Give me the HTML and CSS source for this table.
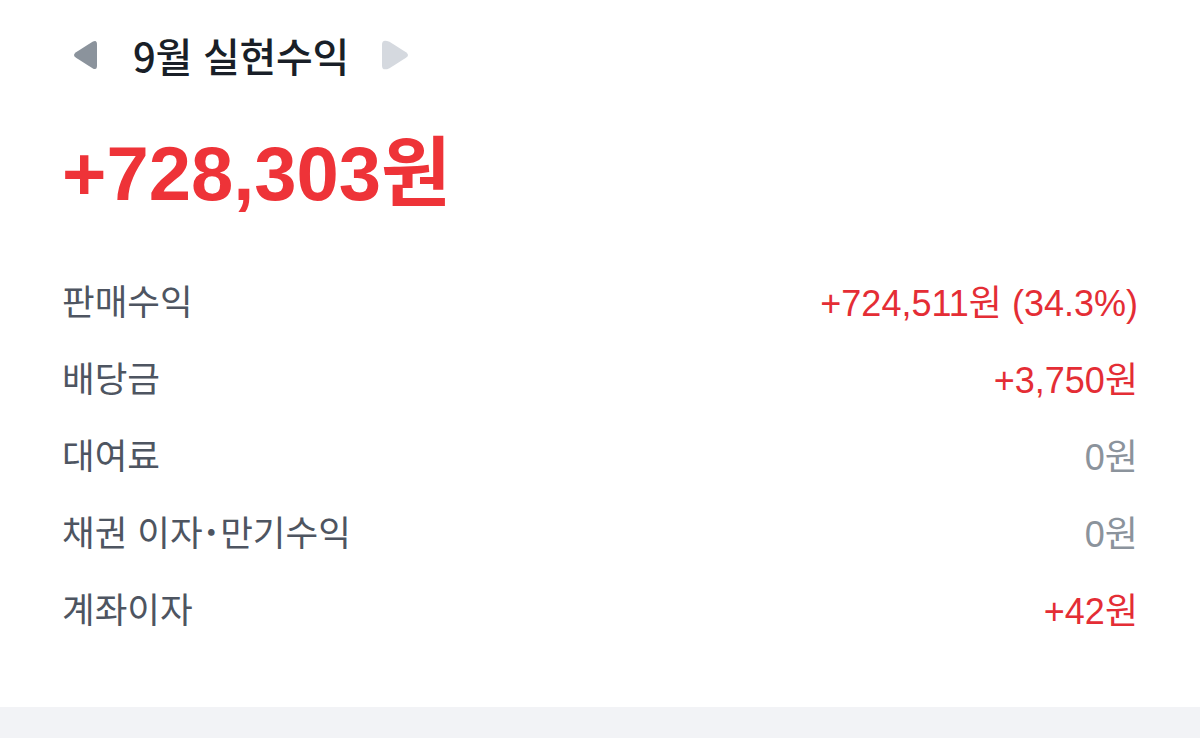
FILE: index.html
```html
<!DOCTYPE html>
<html lang="ko">
<head>
<meta charset="utf-8">
<link rel="stylesheet" href="styles.css">
</head>
<body>
<section class="card">
  <header class="month">
    <button class="nav nav-prev" aria-label="이전 달">
      <svg width="26" height="30" viewBox="0 0 26 30"><path d="M4 12.2 L20.5 1.8 Q25 -0.8 25 4.5 L25 25.5 Q25 30.8 20.5 28.2 L4 17.8 Q0 15 4 12.2 Z" fill="#8b939c"/></svg>
    </button>
    <h1 class="month-title">9월 실현수익</h1>
    <button class="nav nav-next" aria-label="다음 달">
      <svg width="29" height="30" viewBox="0 0 29 30"><path d="M25 12.2 L8.5 1.8 Q1 -1.5 1 4.5 L1 25.5 Q1 31.5 8.5 28.2 L25 17.8 Q29 15 25 12.2 Z" fill="#d5d9df"/></svg>
    </button>
  </header>
  <div class="total">+728,303원</div>
  <ul class="rows">
    <li class="row"><span class="label">판매수익</span><span class="value plus">+724,511원 (34.3%)</span></li>
    <li class="row"><span class="label">배당금</span><span class="value plus">+3,750원</span></li>
    <li class="row"><span class="label">대여료</span><span class="value zero">0원</span></li>
    <li class="row"><span class="label">채권 이자<span class="dot">·</span>만기수익</span><span class="value zero">0원</span></li>
    <li class="row"><span class="label">계좌이자</span><span class="value plus">+42원</span></li>
  </ul>
</section>
<div class="divider"></div>
</body>
</html>
```
FILE: styles.css
```css
* { box-sizing: border-box; }
html, body { margin: 0; padding: 0; background: #fff; }
body {
  font-family: "Liberation Sans", "Noto Sans CJK KR", sans-serif;
  width: 1200px;
  height: 738px;
  overflow: hidden;
}
.card {
  padding: 20px 62px 0 62px;
  height: 707px;
}
.month {
  display: flex;
  align-items: center;
  height: 70px;
}
.nav {
  border: 0;
  background: none;
  padding: 0;
  display: flex;
  align-items: center;
}
.nav-prev { margin-left: 10px; }
.month-title {
  margin: 0 0 0 35px;
  font-family: "Noto Sans CJK KR", sans-serif;
  font-size: 40px;
  font-weight: 500;
  color: #191f28;
  letter-spacing: -0.3px;
}
.nav-next { margin-left: 32px; }
.total {
  margin-top: 40px;
  font-size: 76px;
  font-weight: 700;
  color: #ee3338;
  line-height: 88px;
}
.rows {
  list-style: none;
  margin: 43px 0 0 0;
  padding: 0;
}
.row {
  display: flex;
  justify-content: space-between;
  align-items: center;
  height: 77px;
}
.label {
  font-family: "Noto Sans CJK KR", sans-serif;
  font-size: 35.5px;
  color: #4e5561;
}
.dot { margin: 0 3px; font-weight: 700; }
.value {
  font-size: 36px;
}
.plus { color: #e42d35; }
.zero { color: #8b939c; }
.divider {
  height: 31px;
  background: #f2f3f6;
}
```
